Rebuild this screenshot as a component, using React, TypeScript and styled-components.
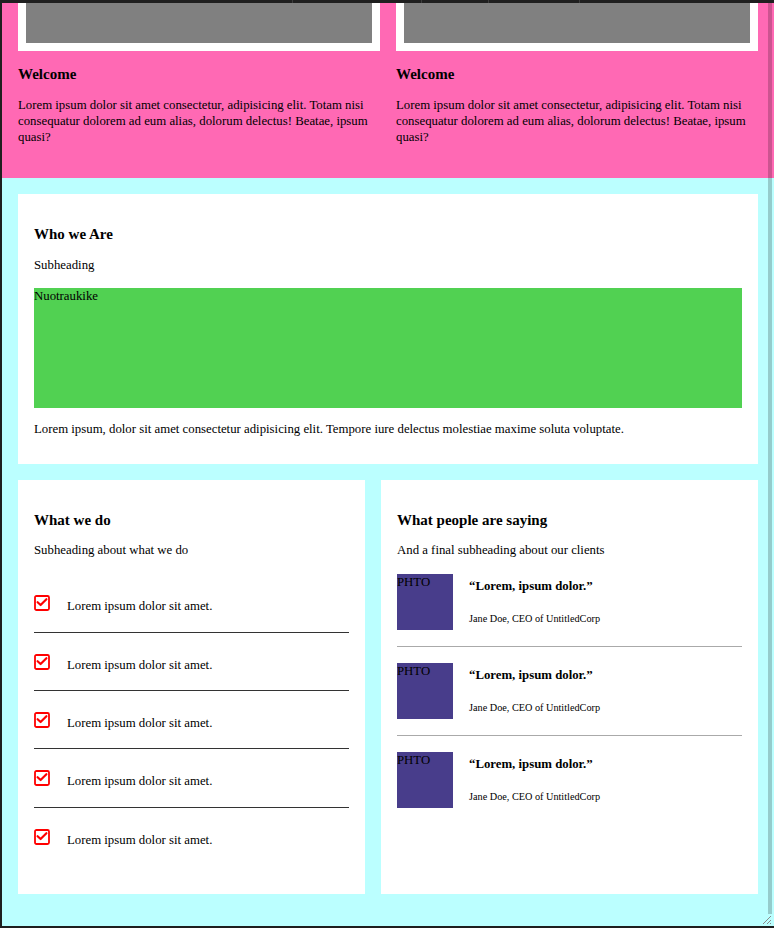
import React from 'react';
import styled, { createGlobalStyle } from 'styled-components';

const GlobalStyle = createGlobalStyle`
  html, body {
    margin: 0;
    padding: 0;
    background: #1f1f1f;
  }
  body {
    font-family: "Liberation Serif", "Times New Roman", serif;
    font-size: 12.8px;
    color: #000;
  }
  * {
    box-sizing: border-box;
  }
`;

const Screen = styled.div`
  width: 774px;
  height: 928px;
  display: flex;
  flex-direction: column;
  background: #1f1f1f;
`;

const TopBar = styled.div`
  height: 3px;
  display: flex;
`;

const TopSegment = styled.div<{ $w: number }>`
  width: ${(p) => p.$w}px;
  border-right: 1px solid #3c3c3c;
`;

const Viewport = styled.div`
  position: relative;
  margin-left: 2px;
  width: 772px;
  height: 923px;
`;

const Frame = styled.div`
  height: 100%;
  overflow: hidden;
  display: flex;
  flex-direction: column;
  justify-content: flex-end;
`;

const ScrollThumb = styled.div`
  position: absolute;
  top: 0;
  right: 2px;
  bottom: 12px;
  width: 4px;
  background: rgba(0, 0, 0, 0.2);
`;

const Grip = styled.svg`
  position: absolute;
  right: 2px;
  bottom: 1px;
`;

const Hero = styled.section`
  flex-shrink: 0;
  background: #ff69b4;
  padding: 16px 16px 33px;
  display: grid;
  grid-template-columns: 1fr 1fr;
  gap: 16px;
`;

const HeroItem = styled.div``;

const ImageFrame = styled.div`
  background: #fff;
  padding: 8px;
`;

const ImageBox = styled.div`
  height: 150px;
  background: #808080;
`;

const Heading = styled.h3<{ $top?: number }>`
  margin: ${(p) => p.$top ?? 0}px 0 0;
  font-size: 15px;
  line-height: 18px;
  font-weight: bold;
`;

const Text = styled.p<{ $top?: number }>`
  margin: ${(p) => p.$top ?? 0}px 0 0;
  font-size: 12.8px;
  line-height: 16px;
`;

const Main = styled.section`
  flex-shrink: 0;
  background: #bbffff;
  padding: 16px 16px 32px;
  display: flex;
  flex-direction: column;
  gap: 16px;
`;

const Card = styled.div<{ $bottom?: number }>`
  background: #fff;
  padding: 31px 16px ${(p) => p.$bottom ?? 28}px;
`;

const Banner = styled.div`
  margin-top: 15px;
  height: 120px;
  background: #51d152;
  font-size: 12.8px;
  line-height: 16px;
`;

const Columns = styled.div`
  display: grid;
  grid-template-columns: 347fr 377fr;
  gap: 16px;
`;

const CheckList = styled.ul`
  list-style: none;
  margin: 16px 0 0;
  padding: 0;
`;

const CheckRow = styled.li`
  display: flex;
  align-items: flex-start;
  gap: 17px;
  padding: 21px 0 17.33px;
  border-bottom: 1px solid #333;
  &:last-child {
    border-bottom: none;
  }
`;

const CheckText = styled.span`
  padding-top: 3px;
  line-height: 16px;
`;

const Reviews = styled.div`
  margin-top: 16px;
`;

const Review = styled.div`
  display: flex;
  gap: 16px;
  padding: 16px 0;
  border-bottom: 1px solid #aaa;
  &:first-child {
    padding-top: 0;
  }
  &:last-child {
    border-bottom: none;
  }
`;

const Photo = styled.div`
  width: 56px;
  height: 56px;
  flex-shrink: 0;
  background: #483d8b;
  line-height: 16px;
`;

const ReviewBody = styled.div`
  display: flex;
  flex-direction: column;
`;

const Quote = styled.h4`
  margin: 4px 0 0;
  font-size: 12.8px;
  line-height: 16px;
  font-weight: bold;
`;

const Author = styled.span`
  margin-top: 19px;
  font-size: 10.24px;
  line-height: 12px;
`;

const CheckIcon = () => (
  <svg width="16" height="16" viewBox="0 0 16 16" style={{ flexShrink: 0 }}>
    <rect x="1" y="1" width="14" height="14" rx="1.5" fill="none" stroke="#ff0000" strokeWidth="1.8" />
    <path d="M3.6 7.2 L6.6 10 L12.4 4.2" fill="none" stroke="#ff0000" strokeWidth="2.2" strokeLinecap="round" strokeLinejoin="round" />
  </svg>
);

const heroText =
  'Lorem ipsum dolor sit amet consectetur, adipisicing elit. Totam nisi consequatur dolorem ad eum alias, dolorum delectus! Beatae, ipsum quasi?';

const App = () => {
  return (
    <>
      <GlobalStyle />
      <Screen>
        <TopBar>
          <TopSegment $w={293} />
          <TopSegment $w={129} />
          <TopSegment $w={67} />
          <TopSegment $w={91} />
        </TopBar>
        <Viewport>
          <Frame>
            <Hero>
              {[0, 1].map((i) => (
                <HeroItem key={i}>
                  <ImageFrame>
                    <ImageBox />
                  </ImageFrame>
                  <Heading $top={14}>Welcome</Heading>
                  <Text $top={14}>{heroText}</Text>
                </HeroItem>
              ))}
            </Hero>
            <Main>
              <Card $bottom={27}>
                <Heading>Who we Are</Heading>
                <Text $top={14}>Subheading</Text>
                <Banner>Nuotraukike</Banner>
                <Text $top={13}>
                  Lorem ipsum, dolor sit amet consectetur adipisicing elit. Tempore iure delectus molestiae maxime soluta voluptate.
                </Text>
              </Card>
              <Columns>
                <Card $bottom={29}>
                  <Heading>What we do</Heading>
                  <Text $top={13}>Subheading about what we do</Text>
                  <CheckList>
                    {[0, 1, 2, 3, 4].map((i) => (
                      <CheckRow key={i}>
                        <CheckIcon />
                        <CheckText>Lorem ipsum dolor sit amet.</CheckText>
                      </CheckRow>
                    ))}
                  </CheckList>
                </Card>
                <Card $bottom={29}>
                  <Heading>What people are saying</Heading>
                  <Text $top={13}>And a final subheading about our clients</Text>
                  <Reviews>
                    {[0, 1, 2].map((i) => (
                      <Review key={i}>
                        <Photo>PHTO</Photo>
                        <ReviewBody>
                          <Quote>“Lorem, ipsum dolor.”</Quote>
                          <Author>Jane Doe, CEO of UntitledCorp</Author>
                        </ReviewBody>
                      </Review>
                    ))}
                  </Reviews>
                </Card>
              </Columns>
            </Main>
          </Frame>
          <ScrollThumb />
          <Grip width="12" height="12" viewBox="0 0 12 12">
            <path d="M11 3 L3 11 M11 7 L7 11 M11 10 L10 11" stroke="#8a8a8a" strokeWidth="1" />
          </Grip>
        </Viewport>
      </Screen>
    </>
  );
};

export default App;
